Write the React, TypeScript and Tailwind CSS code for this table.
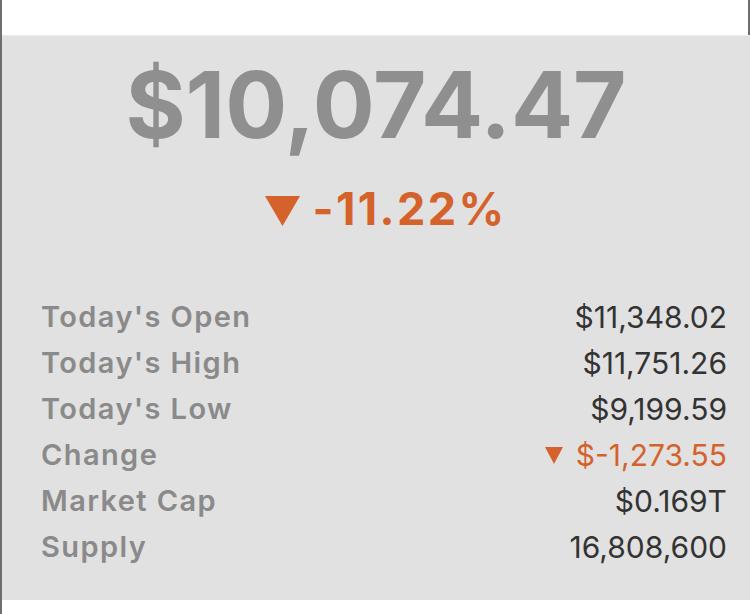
const rows: { label: string; value: string; down?: boolean }[] = [
  { label: "Today's Open", value: "$11,348.02" },
  { label: "Today's High", value: "$11,751.26" },
  { label: "Today's Low", value: "$9,199.59" },
  { label: "Change", value: "$-1,273.55", down: true },
  { label: "Market Cap", value: "$0.169T" },
  { label: "Supply", value: "16,808,600" },
];

function Down({ className }: { className: string }) {
  return (
    <svg viewBox="0 0 10 10" className={className} fill="currentColor" preserveAspectRatio="none">
      <polygon points="0,0 10,0 5,10" />
    </svg>
  );
}

export default function App() {
  return (
    <div className="w-[750px] h-[614px] bg-white border-l-2 border-[#6e6e6e] flex flex-col font-['Inter',sans-serif]">
      <div className="h-[35px] shrink-0 border-r-2 border-[#6e6e6e]" />
      <div className="h-[565px] shrink-0 bg-[#e1e1e1] border-t border-[#ebebeb] flex flex-col">
        <div className="mt-[14px] text-center text-[92px] leading-[110px] font-bold text-[#8f8f8f]">
          $10,074.47
        </div>
        <div className="mt-[21px] flex items-center justify-center gap-[12px] text-[#d4622a] pl-[20px]">
          <Down className="w-[35px] h-[30px] mt-[4px]" />
          <span className="text-[45px] leading-[56px] font-bold tracking-[2.4px]">-11.22%</span>
        </div>
        <div className="mt-[57px] pl-[39px] pr-[23px] flex flex-col">
          {rows.map((r) => (
            <div key={r.label} className="h-[46px] flex items-center justify-between">
              <span className="text-[29px] font-semibold tracking-[1.4px] text-[#8a8a8a]">{r.label}</span>
              <span
                className={
                  r.down
                    ? "flex items-center gap-[13px] text-[30px] text-[#d4622a]"
                    : "text-[30px] text-[#333333]"
                }
              >
                {r.down ? <Down className="w-[18px] h-[17px]" /> : null}
                {r.value}
              </span>
            </div>
          ))}
        </div>
      </div>
    </div>
  );
}
